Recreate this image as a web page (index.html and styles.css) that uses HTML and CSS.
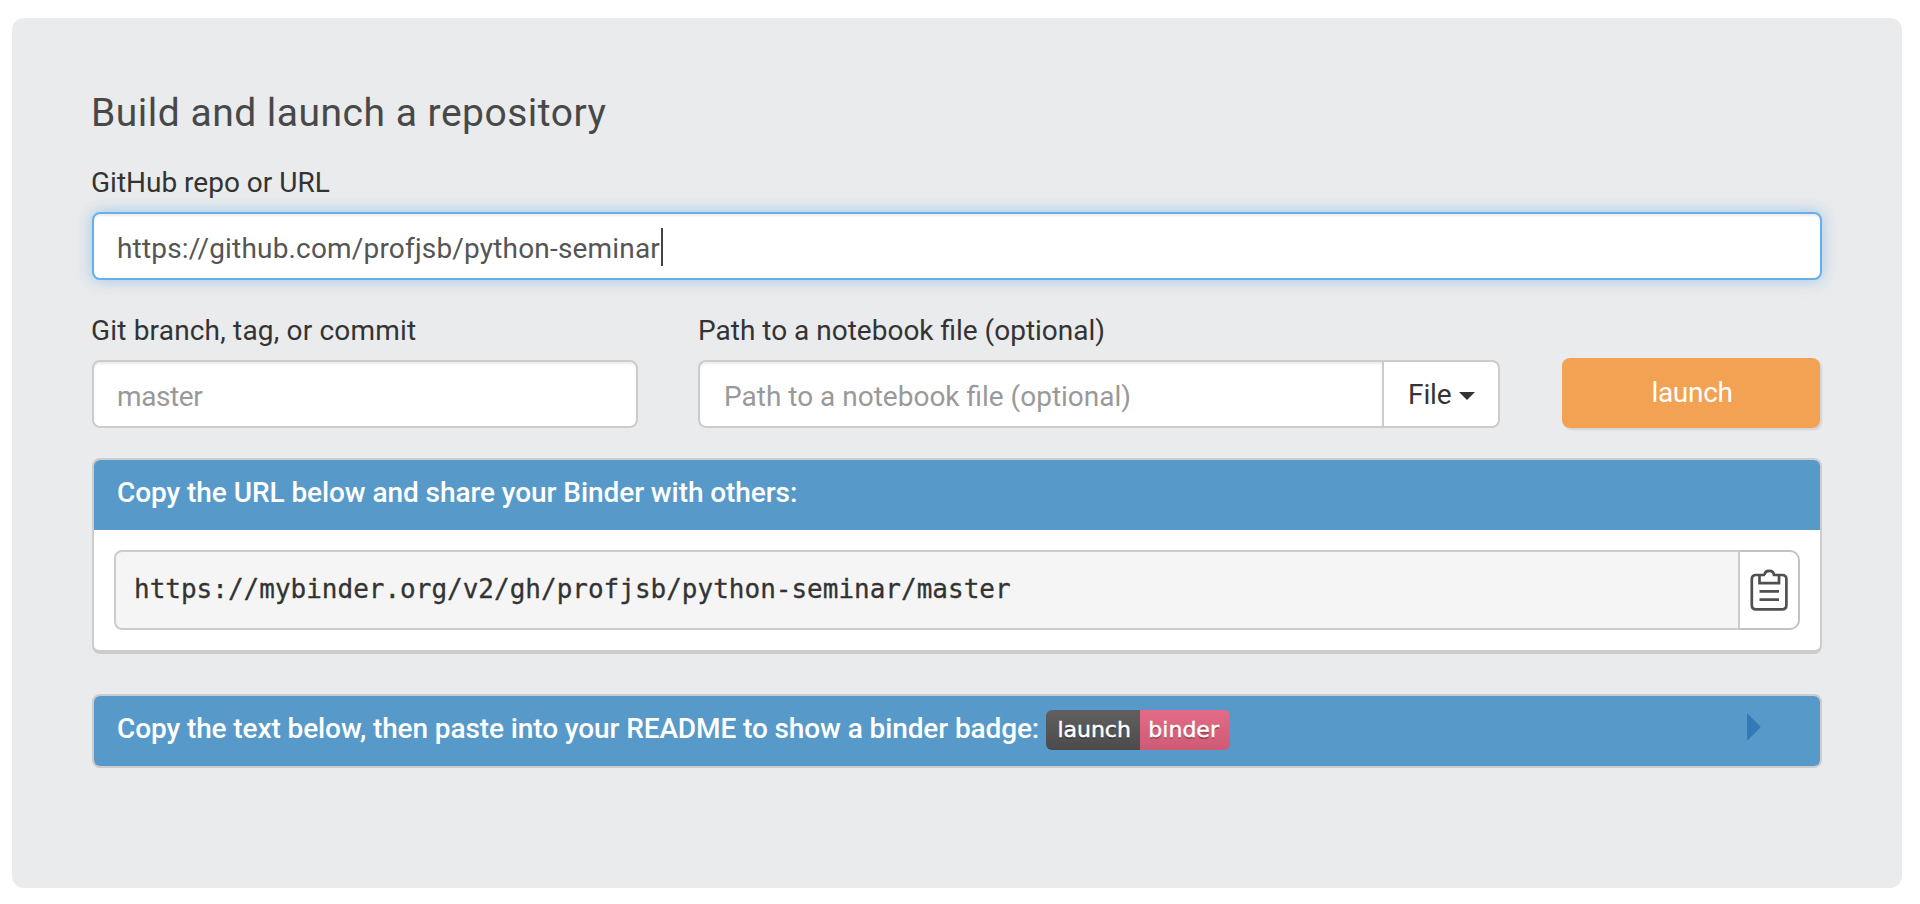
FILE: index.html
```html
<!DOCTYPE html>
<html lang="en">
<head>
<meta charset="utf-8">
<title>Binder</title>
<link rel="stylesheet" href="styles.css">
</head>
<body>
<form class="launcher">
  <h4 class="title">Build and launch a repository</h4>
  <div class="group">
    <label class="label"><span>GitHub repo or URL</span></label>
    <div class="control focused"><span class="t-url">https://github.com/profjsb/python-seminar</span><i class="cursor"></i></div>
  </div>
  <div class="row">
    <div class="group ref">
      <label class="label"><span class="t-ref">Git branch, tag, or commit</span></label>
      <div class="control placeholder"><span class="t-master">master</span></div>
    </div>
    <div class="group path">
      <label class="label"><span>Path to a notebook file (optional)</span></label>
      <div class="addon-group">
        <div class="control placeholder joined"><span>Path to a notebook file (optional)</span></div>
        <div class="file-button"><span class="t-file">File</span><i class="caret"></i></div>
      </div>
    </div>
    <div class="launch-button">launch</div>
  </div>
  <section class="panel">
    <div class="panel-head"><span class="t-share">Copy the URL below and share your Binder with others:</span></div>
    <div class="panel-body">
      <div class="url-box">https://mybinder.org/v2/gh/profjsb/python-seminar/master</div>
      <div class="copy-button">
        <svg width="38" height="42" viewBox="0 0 38 42" fill="none" stroke="#505050" stroke-width="2.7">
          <path d="M15 6H6Q1.8 6 1.8 10.2V36Q1.8 40.4 6 40.4H32Q36.4 40.4 36.4 36V10.2Q36.4 6 32 6H24Q23.6 1.8 19.2 1.8T14.6 6"/>
          <path d="M9.5 6V14.2H29V6M9.5 22.3H29M9.5 30.6H29"/>
        </svg>
      </div>
    </div>
  </section>
  <section class="panel badge-panel">
    <div class="panel-head">
      <span class="t-badge">Copy the text below, then paste into your README to show a binder badge:</span>
      <span class="badge"><span class="badge-left">launch</span><span class="badge-right">binder</span></span>
      <svg class="toggle" width="14" height="28" viewBox="0 0 14 28"><path d="M0 1.5Q0 .3 1 1L13 13Q14 14 13 15L1 27Q0 27.7 0 26.5Z" fill="#337ab7"/></svg>
    </div>
  </section>
</form>
</body>
</html>
```
FILE: styles.css
```css
* { box-sizing: border-box; }
body { margin: 0; padding: 18px 18px 16px 12px; background: #fff; font-family: Roboto, "Liberation Sans", sans-serif; font-size: 28px; line-height: 40px; color: #333; }
.launcher { height: 870px; padding: 70px 80px 0; border-radius: 12px; background: #eaebec; white-space: nowrap; }
.title { margin: 0 0 0 -1px; height: 54px; line-height: 50px; font-size: 39px; font-weight: 400; letter-spacing: .5px; color: #484848; }
.group { display: flex; flex-direction: column; }
.label { height: 70px; padding-top: 21px; margin-left: -1px; line-height: 0; }
.label span { display: block; line-height: 40px; }
.control { display: flex; align-items: center; height: 68px; padding: 6px 23px 0; border: 2px solid #ccc; border-radius: 8px; background: #fff; box-shadow: inset 0 2px 2px rgba(0,0,0,.075); color: #555; }
.focused { border-color: #66afe9; box-shadow: inset 0 2px 2px rgba(0,0,0,.075), 0 0 16px rgba(102,175,233,.6); }
.cursor { width: 2px; height: 38px; margin: -4px 0 0 1px; background: #444; }
.placeholder { color: #999; }
.row { display: flex; height: 148px; margin-top: 30px; }
.row .label { height: 50px; padding-top: 1px; }
.ref { width: 546px; }
.path { width: 802px; margin-left: 60px; }
.path .label { margin-left: 0; }
.addon-group { display: flex; }
.joined { flex: 1; padding-left: 24px; border-right: 0; border-radius: 8px 0 0 8px; }
.file-button { display: flex; align-items: center; width: 118px; height: 68px; padding: 2px 0 0 24px; border: 2px solid #ccc; border-radius: 0 8px 8px 0; background: #fff; }
.caret { margin: 2px 0 0 7px; border: 8px solid transparent; border-top-color: #333; border-bottom: 0; }
.launch-button { width: 258px; height: 70px; margin: 48px 0 0 62px; padding: 15px 0 0 2px; border-radius: 8px; background: #f3a253; box-shadow: 2px 2px 2px rgba(0,0,0,.1); color: #fff; text-align: center; letter-spacing: -.3px; }
.panel { height: 196px; border: 2px solid #ccc; border-bottom-width: 4px; border-radius: 8px; background: #fff; overflow: hidden; }
.panel-head { display: flex; align-items: center; height: 70px; padding: 0 59px 4px 23px; background: #579aca; color: #fff; font-weight: 500; }
.panel-body { display: flex; padding: 20px; }
.url-box { flex: 1; height: 80px; padding-left: 18px; border: 2px solid #ccc; border-radius: 8px 0 0 8px; background: #f5f5f5; font: 26px/74px "DejaVu Sans Mono", monospace; -webkit-text-stroke: .3px #333; }
.copy-button { display: flex; align-items: center; justify-content: center; width: 60px; height: 80px; border: 2px solid #c3c3c3; border-left: 0; border-radius: 0 10px 10px 0; background: #fff; }
.badge-panel { height: 74px; margin-top: 40px; border-bottom-width: 2px; }
.badge { display: flex; height: 40px; margin: 2px 0 0 7px; border-radius: 6px; overflow: hidden; font: 22px/40px "DejaVu Sans", sans-serif; -webkit-text-stroke: .4px #fff; text-shadow: 0 2px 0 rgba(1,1,1,.3); text-align: center; }
.badge-left { width: 94px; padding-left: 2px; background: linear-gradient(#606060, #4b4b4b); }
.badge-right { width: 90px; padding-right: 3px; background: linear-gradient(#e36b88, #cf5a75); }
.toggle { margin-left: auto; margin-top: -4px; }
.t-url { letter-spacing: .18px; }
.t-ref { letter-spacing: .18px; }
.t-master { letter-spacing: -.4px; }
.t-file { letter-spacing: -.1px; }
.t-share { letter-spacing: -.07px; }
.t-badge { letter-spacing: -.1px; }
```
